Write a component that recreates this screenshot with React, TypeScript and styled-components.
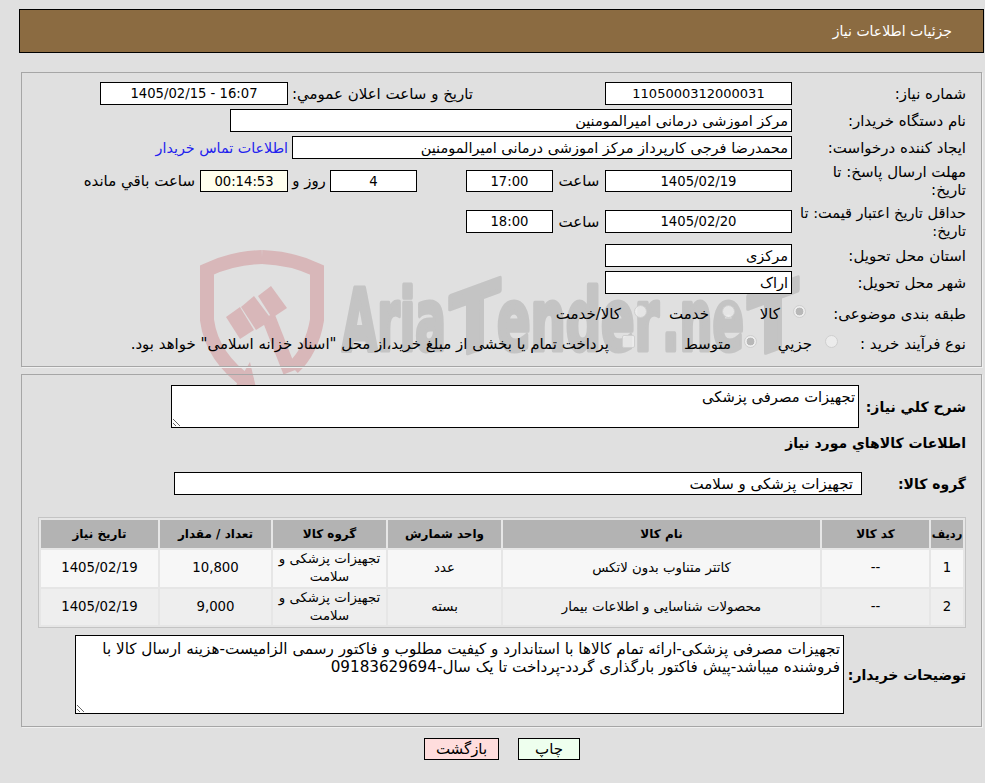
import React from "react";
import styled, { createGlobalStyle } from "styled-components";

const GlobalStyle = createGlobalStyle`
  html, body {
    margin: 0;
    padding: 0;
    background: #e0e0e0;
  }
  body {
    font-family: "DejaVu Sans", "Noto Sans", sans-serif;
    font-size: 15px;
    color: #000;
  }
`;

const Page = styled.div`
  position: relative;
  width: 985px;
  height: 783px;
  overflow: hidden;
  direction: rtl;
`;

const Watermark = styled.svg`
  position: absolute;
  top: 0;
  left: 0;
  width: 985px;
  height: 783px;
`;

const Content = styled.div`
  position: relative;
  display: flex;
  flex-direction: column;
  padding-top: 9px;
`;

const TitleBar = styled.div`
  box-sizing: border-box;
  display: flex;
  align-items: center;
  width: 965px;
  height: 44px;
  margin-right: 1px;
  padding-right: 31px;
  background: #8b6b41;
  border: 1px solid #000;
  color: #fff;
  font-size: 14px;
`;

const Panel = styled.div<{ $top: number; $height: number }>`
  box-sizing: border-box;
  width: 961px;
  height: ${(p) => p.$height}px;
  margin-top: ${(p) => p.$top}px;
  margin-right: 3px;
  padding-right: 15px;
  border: 1px solid #a6a6a6;
  box-shadow: 1px 1px 0 #f0f0f0;
`;

const Row = styled.div<{ $top: number; $height?: number }>`
  display: flex;
  align-items: center;
  height: ${(p) => p.$height ?? 23}px;
  margin-top: ${(p) => p.$top}px;
`;

const Label = styled.div<{ $w: number; $bold?: boolean; $gap?: number; $size?: number }>`
  flex: none;
  width: ${(p) => p.$w}px;
  margin-right: ${(p) => p.$gap ?? 0}px;
  line-height: 18px;
  font-size: ${(p) => p.$size ?? (p.$bold ? 14 : 15)}px;
  font-weight: ${(p) => (p.$bold ? 700 : 400)};
  white-space: nowrap;
`;

const Field = styled.input<{ $w: number; $start?: boolean; $bg?: string; $pad?: number; $size?: number }>`
  flex: none;
  box-sizing: border-box;
  width: ${(p) => p.$w}px;
  height: 100%;
  padding: 0 ${(p) => p.$pad ?? 3}px;
  border: 1px solid #000;
  border-radius: 0;
  outline: none;
  background: ${(p) => p.$bg ?? "#fff"};
  color: #000;
  font: inherit;
  font-size: ${(p) => p.$size ?? (p.$start ? 14.5 : 13.2)}px;
  text-align: ${(p) => (p.$start ? "right" : "center")};
`;

const Note = styled.span<{ $w?: number; $right?: number }>`
  flex: none;
  width: ${(p) => (p.$w ? `${p.$w}px` : "auto")};
  margin-right: ${(p) => p.$right ?? 0}px;
  text-align: center;
  white-space: nowrap;
`;

const ContactLink = styled.a`
  margin-right: 4px;
  color: #2222ee;
  font-size: 14.3px;
  white-space: nowrap;
`;

const Option = styled.label<{ $w?: number }>`
  flex: none;
  display: flex;
  align-items: center;
  gap: 13px;
  width: ${(p) => (p.$w ? `${p.$w}px` : "auto")};
  white-space: nowrap;
`;

const Radio = styled.input`
  appearance: none;
  box-sizing: border-box;
  flex: none;
  width: 13px;
  height: 13px;
  margin: 0 0 5px;
  border: 1px solid #cfcfcf;
  border-radius: 50%;
  background: rgba(240, 240, 240, 0.75);
  &:checked {
    background: radial-gradient(circle, #b8b8b8 0 3.6px, #ededed 4.2px);
  }
`;

const Check = styled.input`
  appearance: none;
  box-sizing: border-box;
  flex: none;
  width: 13px;
  height: 13px;
  margin: 0 0 5px;
  border: 1px solid #cfcfcf;
  border-radius: 2px;
  background: rgba(240, 240, 240, 0.75);
`;

const Area = styled.textarea<{ $w: number; $h: number; $size?: number; $top?: number }>`
  flex: none;
  box-sizing: border-box;
  display: block;
  width: ${(p) => p.$w}px;
  height: ${(p) => p.$h}px;
  margin: 0;
  padding: ${(p) => p.$top ?? 2}px 3px 2px;
  border: 1px solid #000;
  border-radius: 0;
  outline: none;
  background: #fff;
  color: #000;
  font: inherit;
  font-size: ${(p) => p.$size ?? 14.7}px;
  line-height: 18px;
`;

const Heading = styled.div`
  margin-top: 6px;
  line-height: 18px;
  font-size: 14px;
  font-weight: 700;
`;

const Items = styled.table`
  box-sizing: border-box;
  width: 928px;
  height: 111px;
  margin-top: 22px;
  border: 1px solid #c4c4c4;
  border-spacing: 2px;
  background: #e6e6e6;
  table-layout: fixed;
`;

const HeadCell = styled.th<{ $w: number; $small?: boolean }>`
  width: ${(p) => p.$w}px;
  height: 28px;
  padding: 0;
  background: #b3b3b3;
  font-size: ${(p) => (p.$small ? 11.5 : 12)}px;
  font-weight: 700;
`;

const ItemRow = styled.tr<{ $bg: string }>`
  background: ${(p) => p.$bg};
`;

const Cell = styled.td`
  padding: 0;
  height: 36px;
  line-height: 18px;
  font-size: 13.3px;
  text-align: center;
`;

const Actions = styled.div`
  display: flex;
  justify-content: center;
  gap: 19px;
  margin-top: 11px;
  margin-left: 19px;
`;

const ActionButton = styled.button<{ $bg: string; $w: number }>`
  box-sizing: border-box;
  width: ${(p) => p.$w}px;
  height: 22px;
  padding: 0;
  border: 1px solid #000;
  border-radius: 0;
  background: ${(p) => p.$bg};
  color: #000;
  font: inherit;
  font-size: 15px;
`;

const rows = [
  { id: "1", code: "--", name: "کاتتر متناوب بدون لاتکس", unit: "عدد", qty: "10,800", bg: "#f7f7f7" },
  { id: "2", code: "--", name: "محصولات شناسایی و اطلاعات بیمار", unit: "بسته", qty: "9,000", bg: "#eeeeee" },
];

const pink = "#d8b7b9";
const grey = "#c4c4c4";

function Logo() {
  return (
    <Watermark viewBox="0 0 985 783">
      <g fill="none" stroke={pink} strokeWidth="14">
        <path d="M262 257 Q232 258 207 270 V320 Q212 358 250 384" />
        <path d="M262 257 Q292 258 317 270 V320 Q312 350 293 368" />
        <path d="M268 316 L290 372" />
      </g>
      <g fill={pink}>
        <polygon points="226,317 240,307 254,330 240,339" />
        <polygon points="241,307 254,296 272,320 256,330" />
        <polygon points="258,296 271,286 287,308 272,318" />
        <polygon points="250,362 257,392 232,392" />
      </g>
      <g
        fill={grey}
        stroke={grey}
        strokeWidth="5"
        strokeLinejoin="round"
        fontFamily="DejaVu Sans, sans-serif"
        fontWeight="700"
        fontSize="86"
        direction="ltr"
      >
        <text x="342" y="350" textLength="104" lengthAdjust="spacingAndGlyphs">Aria</text>
        <text x="450" y="350" textLength="50" lengthAdjust="spacingAndGlyphs" transform="translate(0 173) skewY(-20)">T</text>
        <text x="497" y="350" textLength="162" lengthAdjust="spacingAndGlyphs">ender</text>
        <text x="662" y="350" textLength="82" lengthAdjust="spacingAndGlyphs">.ne</text>
        <text x="748" y="350" textLength="50" lengthAdjust="spacingAndGlyphs" transform="translate(0 281) skewY(-20)">T</text>
      </g>
    </Watermark>
  );
}

export default function App() {
  return (
    <Page>
      <GlobalStyle />
      <Logo />
      <Content>
        <TitleBar>جزئیات اطلاعات نیاز</TitleBar>

        <Panel $top={19} $height={295}>
          <Row $top={9}>
            <Label $w={174}>شماره نیاز:</Label>
            <Field $w={187} $size={13} readOnly value="1105000312000031" />
            <Label $w={185} $gap={132}>تاریخ و ساعت اعلان عمومي:</Label>
            <Field $w={188} readOnly value="16:07 - 1405/02/15" />
          </Row>
          <Row $top={4}>
            <Label $w={174}>نام دستگاه خریدار:</Label>
            <Field $w={562} $start readOnly value="مرکز اموزشی درمانی امیرالمومنین" />
          </Row>
          <Row $top={4}>
            <Label $w={174}>ایجاد کننده درخواست:</Label>
            <Field $w={500} $start readOnly value="محمدرضا فرجی کارپرداز مرکز اموزشی درمانی امیرالمومنین" />
            <ContactLink>اطلاعات تماس خریدار</ContactLink>
          </Row>
          <Row $top={11} $height={22}>
            <Label $w={174}>مهلت ارسال پاسخ: تا<br />تاریخ:</Label>
            <Field $w={187} readOnly value="1405/02/19" />
            <Note $w={52}>ساعت</Note>
            <Field $w={87} readOnly value="17:00" />
            <Note $w={49} />
            <Field $w={87} readOnly value="4" />
            <Note $w={42}>روز و</Note>
            <Field $w={88} $bg="#ffffee" readOnly value="00:14:53" />
            <Note $right={5}>ساعت باقي مانده</Note>
          </Row>
          <Row $top={18}>
            <Label $w={174} $size={14.5}>حداقل تاریخ اعتبار قیمت: تا<br />تاریخ:</Label>
            <Field $w={187} readOnly value="1405/02/20" />
            <Note $w={52}>ساعت</Note>
            <Field $w={87} readOnly value="18:00" />
          </Row>
          <Row $top={11}>
            <Label $w={174}>استان محل تحویل:</Label>
            <Field $w={187} $start readOnly value="مرکزی" />
          </Row>
          <Row $top={4}>
            <Label $w={174}>شهر محل تحویل:</Label>
            <Field $w={187} $start readOnly value="اراک" />
          </Row>
          <Row $top={8}>
            <Label $w={160}>طبقه بندی موضوعی:</Label>
            <Option $w={71}><Radio type="radio" name="kind" disabled defaultChecked />کالا</Option>
            <Option $w={88}><Radio type="radio" name="kind" disabled />خدمت</Option>
            <Option><Radio type="radio" name="kind" disabled />کالا/خدمت</Option>
          </Row>
          <Row $top={7}>
            <Label $w={128}>نوع فرآیند خرید :</Label>
            <Option $w={81}><Radio type="radio" name="process" disabled />جزيي</Option>
            <Option $w={122}><Radio type="radio" name="process" disabled defaultChecked />متوسط</Option>
            <Option><Check type="checkbox" disabled />پرداخت تمام یا بخشی از مبلغ خرید،از محل "اسناد خزانه اسلامی" خواهد بود.</Option>
          </Row>
        </Panel>

        <Panel $top={7} $height={353}>
          <Row $top={10} $height={43}>
            <Label $w={107} $bold>شرح کلي نیاز:</Label>
            <Area $w={688} $h={43} readOnly value="تجهیزات مصرفی پزشکی" />
          </Row>
          <Heading>اطلاعات کالاهاي مورد نیاز</Heading>
          <Row $top={20}>
            <Label $w={104} $bold>گروه کالا:</Label>
            <Field $w={688} $start $pad={8} $size={15} readOnly value="تجهیزات پزشکی و سلامت" />
          </Row>
          <Items>
            <thead>
              <tr>
                <HeadCell $w={32} $small>ردیف</HeadCell>
                <HeadCell $w={107}>کد کالا</HeadCell>
                <HeadCell $w={317}>نام کالا</HeadCell>
                <HeadCell $w={113}>واحد شمارش</HeadCell>
                <HeadCell $w={113}>گروه کالا</HeadCell>
                <HeadCell $w={111}>تعداد / مقدار</HeadCell>
                <HeadCell $w={117}>تاریخ نیاز</HeadCell>
              </tr>
            </thead>
            <tbody>
              {rows.map((r) => (
                <ItemRow key={r.id} $bg={r.bg}>
                  <Cell>{r.id}</Cell>
                  <Cell>{r.code}</Cell>
                  <Cell>{r.name}</Cell>
                  <Cell>{r.unit}</Cell>
                  <Cell>تجهیزات پزشکی و سلامت</Cell>
                  <Cell>{r.qty}</Cell>
                  <Cell>1405/02/19</Cell>
                </ItemRow>
              ))}
            </tbody>
          </Items>
          <Row $top={7} $height={79}>
            <Label $w={122} $bold>توضیحات خریدار:</Label>
            <Area
              $w={769}
              $h={79}
              $size={15.2}
              $top={4}
              readOnly
              value="تجهیزات مصرفی پزشکی-ارائه تمام کالاها با استاندارد و کیفیت مطلوب و فاکتور رسمی الزامیست-هزینه ارسال کالا با فروشنده میباشد-پیش فاکتور بارگذاری گردد-پرداخت تا یک سال-09183629694"
            />
          </Row>
        </Panel>

        <Actions>
          <ActionButton $bg="#eeffee" $w={62}>چاپ</ActionButton>
          <ActionButton $bg="#ffdddd" $w={75}>بازگشت</ActionButton>
        </Actions>
      </Content>
    </Page>
  );
}
